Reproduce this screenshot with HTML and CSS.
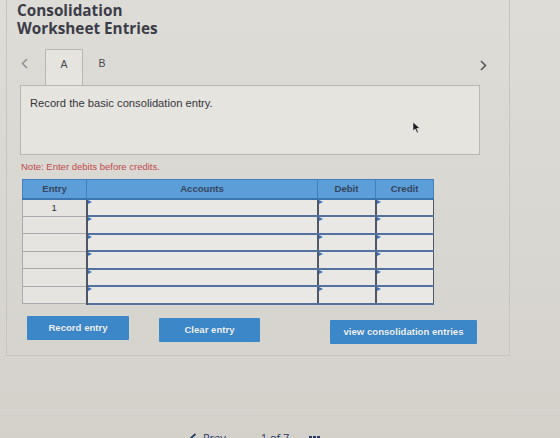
FILE: index.html
```html
<!DOCTYPE html>
<html lang="en">
<head>
  <meta charset="UTF-8">
  <title>Consolidation Worksheet Entries</title>
  <link rel="stylesheet" href="styles.css">
</head>
<body>

  <div class="panel">
    <h1 class="title">Consolidation<br>Worksheet Entries</h1>

    <div class="tabs">
      <span class="tab-nav">
        <svg width="7" height="11" viewBox="0 0 7 11"><path d="M6 1 L1.5 5.5 L6 10" fill="none" stroke="#8a8a8e" stroke-width="1.4"/></svg>
      </span>
      <div class="tab active">A</div>
      <div class="tab">B</div>
      <span class="tab-nav next">
        <svg width="7" height="11" viewBox="0 0 7 11"><path d="M1 1 L5.5 5.5 L1 10" fill="none" stroke="#55565c" stroke-width="1.6"/></svg>
      </span>
    </div>

    <div class="prompt">Record the basic consolidation entry.</div>

    <p class="note">Note: Enter debits before credits.</p>

    <table class="journal">
      <thead>
        <tr>
          <th class="col-entry">Entry</th>
          <th class="col-account">Accounts</th>
          <th class="col-amount">Debit</th>
          <th class="col-amount">Credit</th>
        </tr>
      </thead>
      <tbody>
        <tr>
          <td class="entry">1</td>
          <td class="field"></td>
          <td class="field"></td>
          <td class="field"></td>
        </tr>
        <tr>
          <td class="entry"></td>
          <td class="field"></td>
          <td class="field"></td>
          <td class="field"></td>
        </tr>
        <tr>
          <td class="entry"></td>
          <td class="field"></td>
          <td class="field"></td>
          <td class="field"></td>
        </tr>
        <tr>
          <td class="entry"></td>
          <td class="field"></td>
          <td class="field"></td>
          <td class="field"></td>
        </tr>
        <tr>
          <td class="entry"></td>
          <td class="field"></td>
          <td class="field"></td>
          <td class="field"></td>
        </tr>
        <tr>
          <td class="entry"></td>
          <td class="field"></td>
          <td class="field"></td>
          <td class="field"></td>
        </tr>
      </tbody>
    </table>

    <div class="actions">
      <button class="btn btn-record">Record entry</button>
      <button class="btn btn-clear">Clear entry</button>
      <button class="btn btn-view">view consolidation entries</button>
    </div>

    <!-- mouse pointer resting over the prompt -->
    <svg class="pointer" width="9" height="13" viewBox="0 0 9 13">
      <path d="M1 1 L1 10 L3.2 8 L5 12 L6.4 11.3 L4.7 7.5 L7.8 7.3 Z" fill="#1d1d1f" stroke="#f2f2f2" stroke-width="0.6"/>
    </svg>
  </div>

  <div class="pager">
    <svg class="pager-prev" width="8" height="10" viewBox="0 0 8 10"><path d="M6.5 1 L2 5 L6.5 9" fill="none" stroke="#2c3a66" stroke-width="1.8"/></svg>
    <span class="pager-label">Prev</span>
    <span class="pager-count">1 of 7</span>
    <span class="pager-grid"><i></i><i></i><i></i></span>
  </div>

</body>
</html>
```

FILE: styles.css
```css
* {
  padding: 0;
  margin: 0;
  box-sizing: border-box;
}

body {
  height: 438px;
  overflow: hidden;
  background: linear-gradient(#dedcd7, #d8d6d0 60%, #d3d1ca);
  font-family: 'Liberation Sans', Arial, sans-serif;
  color: #333;
}

.panel {
  position: relative;
  margin: 0 50px 0 6px;
  padding: 1px 0 17px 10px;
  border: 1px solid #c6c4be;
  border-top: none;
  height: 356px;
}

.title {
  font-family: 'Open Sans', sans-serif;
  font-size: 15.3px;
  line-height: 18px;
  font-weight: 700;
  color: #3b3c48;
}

/* tab strip */
.tabs {
  display: flex;
  align-items: flex-start;
  margin-top: 12px;
  padding-left: 4px;
  width: 473px;
}

.tab-nav {
  display: flex;
  width: 24px;
  padding-top: 9px;
}

.tab-nav.next {
  margin-left: auto;
  width: 10px;
  padding-top: 11px;
}

.tab {
  width: 38px;
  height: 36px;
  padding-top: 8px;
  text-align: center;
  font-size: 10.5px;
  line-height: 13px;
  color: #48484f;
}

.tab.active {
  position: relative;
  z-index: 1;
  background: #e6e4df;
  border: 1px solid #b9b7b1;
  border-bottom: none;
  margin-bottom: -1px;
}

.prompt {
  margin-left: 3px;
  width: 460px;
  height: 70px;
  padding: 11px 0 0 9px;
  background: #e6e4df;
  border: 1px solid #b9b7b1;
  font-size: 11.2px;
  color: #35353a;
}

.note {
  margin: 6px 0 0 4px;
  font-size: 9.5px;
  line-height: 12px;
  color: #bf4a4c;
}

/* journal grid */
.journal {
  margin: 6px 0 0 5px;
  width: 411px;
  border-collapse: collapse;
  table-layout: fixed;
}

.journal th {
  height: 19px;
  background: #5c9fd8;
  border: 1px solid #3f7fbf;
  border-bottom: 2px solid #3c74b0;
  font-size: 9.6px;
  font-weight: 700;
  color: #34455e;
  text-align: center;
}

.col-entry { width: 64px; }
.col-account { width: 231px; }
.col-amount { width: 58px; }

.journal td {
  height: 17.5px;
  padding: 0;
}

.journal td.entry {
  background: #e5e4e0;
  border: 1px solid #a9a9a9;
  border-right: 2px solid #4f5666;
  text-align: center;
  font-size: 9.5px;
  color: #333;
}

.journal td.field {
  position: relative;
  background: #e9e8e4;
  border-top: 2px solid #5372a0;
  border-bottom: 2px solid #5372a0;
  border-left: 2px solid #505767;
  border-right: 1px solid #505767;
}

.journal td.field::before {
  content: '';
  position: absolute;
  left: 0;
  top: 0;
  border-left: 4px solid #3a73bd;
  border-top: 2.5px solid transparent;
  border-bottom: 2.5px solid transparent;
}

.actions {
  display: flex;
  margin: 11px 0 0 10px;
}

.btn {
  height: 24px;
  border: none;
  border-radius: 1px;
  background: #3b87c8;
  color: #eef3f8;
  font-family: 'Liberation Sans', Arial, sans-serif;
  font-size: 9.6px;
  font-weight: 700;
  text-shadow: 0 0 1px rgba(0, 0, 0, .2);
}

.btn-record { width: 102px; }
.btn-clear { width: 101px; margin-left: 30px; margin-top: 2px; }
.btn-view { width: 147px; margin-left: 70px; margin-top: 4px; }

.pointer {
  position: absolute;
  left: 405px;
  top: 121px;
}

/* bottom navigation, cut off by the window edge */
.pager {
  display: flex;
  align-items: center;
  margin-top: 59px;
  padding: 14px 0 0 189px;
  border-top: 1px solid #d0cec8;
  font-family: 'Open Sans', sans-serif;
  font-size: 11px;
  color: #2c3a66;
}

.pager-label {
  margin-left: 6px;
}

.pager-count {
  margin-left: 35px;
}

.pager-grid {
  display: flex;
  gap: 1px;
  margin-left: 20px;
}

.pager-grid i {
  width: 3px;
  height: 3px;
  background: #2c3a66;
}
```
